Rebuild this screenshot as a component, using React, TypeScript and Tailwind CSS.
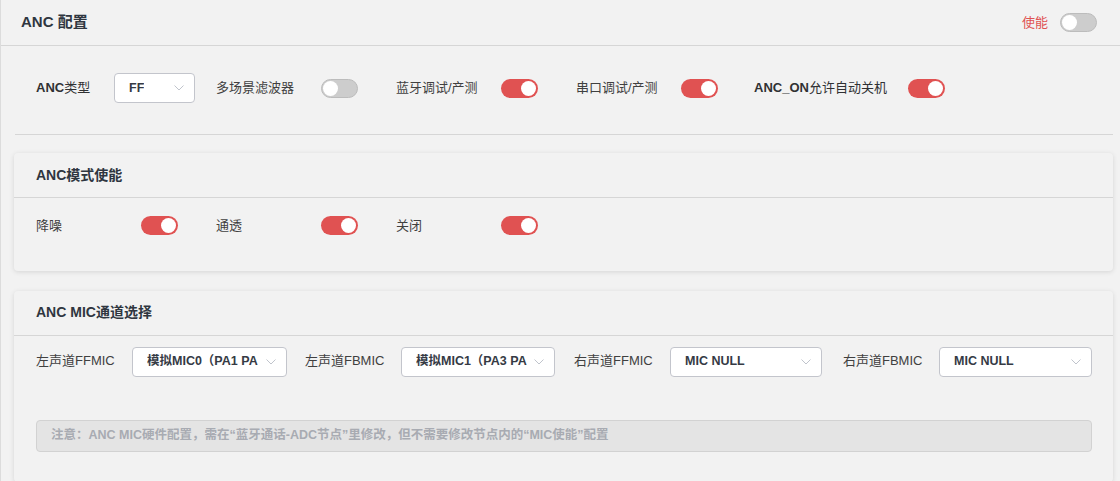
import React from "react";

const font = { fontFamily: '"Liberation Sans", "Noto Sans CJK SC", sans-serif' };

function Toggle({ on }: { on: boolean }) {
  return (
    <span
      className={
        on
          ? "inline-flex h-[19px] w-[37px] shrink-0 items-center justify-end rounded-full bg-[#e05252] px-[2px]"
          : "inline-flex h-[19px] w-[37px] shrink-0 items-center justify-start rounded-full border border-[#bcbcbc] bg-[#cdcdcd] px-[1px]"
      }
    >
      <span className="h-[15px] w-[15px] rounded-full bg-white" />
    </span>
  );
}

function Chevron() {
  return (
    <svg width="10" height="6" viewBox="0 0 10 6" className="shrink-0">
      <polyline points="0.5,0.5 5,5 9.5,0.5" fill="none" stroke="#c0c4cc" strokeWidth="1" />
    </svg>
  );
}

function Select({ value, width }: { value: string; width: string }) {
  return (
    <div
      className={`flex h-[30px] shrink-0 items-center justify-between rounded-[4px] border border-[#c3c5cc] bg-white pl-[14px] pr-[10px] ${width}`}
    >
      <span className="overflow-hidden whitespace-nowrap text-[12.5px] font-semibold text-[#353a44]">{value}</span>
      <Chevron />
    </div>
  );
}

function Card({ title, children }: { title: string; children: React.ReactNode }) {
  return (
    <div className="ml-[13px] mr-[7px] rounded-[4px] bg-[#f2f2f2] shadow-[0_1px_5px_rgba(0,0,0,0.12)]">
      <div className="flex h-[45px] items-center border-b border-[#d6d6d6] px-[22px] text-[14px] font-semibold text-[#2f3640]">
        {title}
      </div>
      {children}
    </div>
  );
}

export default function App() {
  const modes = ["降噪", "通透", "关闭"];
  const mics = [
    { label: "左声道FFMIC", value: "模拟MIC0（PA1 PA", w: "w-[155px]" },
    { label: "左声道FBMIC", value: "模拟MIC1（PA3 PA", w: "w-[154px]" },
    { label: "右声道FFMIC", value: "MIC NULL", w: "w-[152px]" },
    { label: "右声道FBMIC", value: "MIC NULL", w: "w-[153px]" },
  ];

  return (
    <div className="h-[481px] w-[1120px] overflow-hidden border-l border-[#dcdcdc] bg-[#f2f2f2]" style={font}>
      <div className="flex h-[46px] items-center justify-between border-b border-[#d6d6d6] pl-[20px] pr-[23px]">
        <span className="text-[15px] font-bold text-[#2f3640]">ANC 配置</span>
        <div className="flex items-center gap-[12px]">
          <span className="text-[13px] text-[#e05252]">使能</span>
          <Toggle on={false} />
        </div>
      </div>

      <div className="ml-[14px] mr-[7px] flex items-center border-b border-[#d6d6d6] pb-[31px] pl-[21px] pt-[27px] text-[13px] text-[#404040]">
        <div className="flex w-[180px] shrink-0 items-center">
          <span className="w-[78px] text-[#303133]">
            <span className="font-bold">ANC</span>类型
          </span>
          <Select value="FF" width="w-[81px]" />
        </div>
        <div className="flex w-[180px] shrink-0 items-center">
          <span className="w-[105px]">多场景滤波器</span>
          <Toggle on={false} />
        </div>
        <div className="flex w-[180px] shrink-0 items-center">
          <span className="w-[105px]">蓝牙调试/产测</span>
          <Toggle on />
        </div>
        <div className="flex w-[178px] shrink-0 items-center">
          <span className="w-[105px]">串口调试/产测</span>
          <Toggle on />
        </div>
        <div className="flex items-center">
          <span className="w-[154px] text-[#303133]">
            <span className="font-bold">ANC_ON</span>允许自动关机
          </span>
          <Toggle on />
        </div>
      </div>

      <div className="mt-[18px]">
        <Card title="ANC模式使能">
          <div className="flex items-center px-[22px] pb-[35px] pt-[18px] text-[13px] text-[#404040]">
            {modes.map((m) => (
              <div key={m} className="flex w-[180px] shrink-0 items-center">
                <span className="w-[105px]">{m}</span>
                <Toggle on />
              </div>
            ))}
          </div>
        </Card>
      </div>

      <div className="mt-[20px]">
        <Card title="ANC MIC通道选择">
          <div className="pb-[30px] pl-[22px] pr-[21px] pt-[11px]">
            <div className="flex items-center text-[13px] text-[#404040]">
              {mics.map((m) => (
                <div key={m.label} className="flex w-[269px] shrink-0 items-center last:w-auto">
                  <span className="w-[96px] pb-[2px]">{m.label}</span>
                  <Select value={m.value} width={m.w} />
                </div>
              ))}
            </div>
            <div className="mt-[43px] flex h-[32px] items-center rounded-[4px] border border-[#d2d2d2] bg-[#e4e4e4] px-[14px] text-[12.5px] font-semibold text-[#a8abb2]">
              注意：ANC MIC硬件配置，需在“蓝牙通话-ADC节点”里修改，但不需要修改节点内的“MIC使能”配置
            </div>
          </div>
        </Card>
      </div>
    </div>
  );
}
